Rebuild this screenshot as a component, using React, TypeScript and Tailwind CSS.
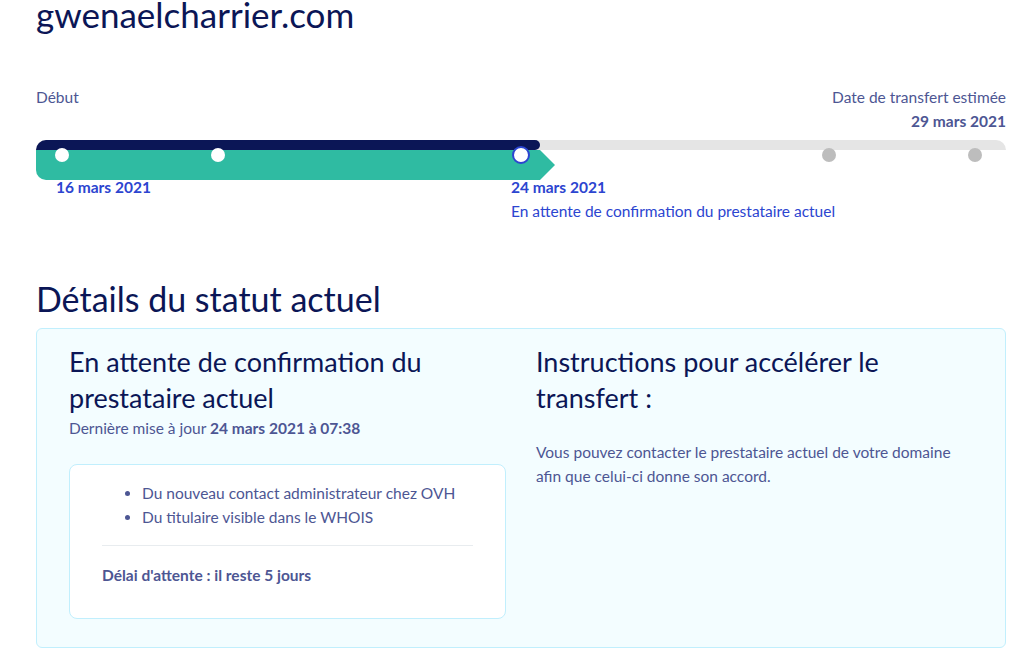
import React from "react";

const font = { fontFamily: "Lato, 'Noto Sans', sans-serif" };

export default function App() {
  const dots = [
    { x: 26, kind: "white" },
    { x: 182, kind: "white" },
    { x: 485, kind: "current" },
    { x: 793, kind: "grey" },
    { x: 939, kind: "grey" },
  ];
  return (
    <div className="w-[1036px] h-[650px] overflow-hidden bg-white" style={font}>
      <div className="pl-[36px] pr-[30px]">
        <h1 className="text-[35px] leading-[40px] -mt-[6px] text-[#0b1656]">gwenaelcharrier.com</h1>

        <div className="mt-[51px] flex justify-between items-start text-[15.5px] text-[#4d5693]">
          <div className="leading-[24px]">Début</div>
          <div className="text-right leading-[24px]">
            <div>Date de transfert estimée</div>
            <div className="font-bold">29 mars 2021</div>
          </div>
        </div>

        <div className="relative mt-[7px] w-[970px] h-[40px]">
          <div className="flex flex-col">
            <div className="h-[10px] bg-[#e5e5e5] rounded-tr-[10px] rounded-tl-[10px]">
              <div className="h-[10px] w-[504px] bg-[#0b1656] rounded-tl-[10px] rounded-r-[5px]" />
            </div>
            <div
              className="h-[30px] w-[519px] bg-[#2fbba2] rounded-bl-[10px]"
              style={{ clipPath: "polygon(0 0, 504px 0, 519px 50%, 504px 100%, 0 100%)" }}
            />
          </div>
          {dots.map((d, i) => (
            <div
              key={i}
              className={
                d.kind === "current"
                  ? "absolute w-[18px] h-[18px] rounded-full bg-white border-2 border-[#2c45d0]"
                  : d.kind === "white"
                  ? "absolute w-[14px] h-[14px] rounded-full bg-white"
                  : "absolute w-[14px] h-[14px] rounded-full bg-[#bdbdbd]"
              }
              style={
                d.kind === "current"
                  ? { left: d.x - 9, top: 6 }
                  : { left: d.x - 7, top: 8 }
              }
            />
          ))}
        </div>

        <div className="-mt-[5px] flex text-[15.5px] text-[#2c45d0] leading-[24px]">
          <div className="w-[475px] pl-[20px] font-bold">16 mars 2021</div>
          <div>
            <div className="font-bold">24 mars 2021</div>
            <div>En attente de confirmation du prestataire actuel</div>
          </div>
        </div>

        <h2 className="mt-[56px] text-[34px] leading-[40px] text-[#0b1656]">Détails du statut actuel</h2>

        <div className="mt-[9px] w-[970px] h-[320px] rounded-[6px] border border-[#c1effd] bg-[#f3fdff] px-[32px] pt-[15px] grid grid-cols-2 gap-[30px]">
          <div>
            <h3 className="text-[27px] leading-[36px] text-[#0b1656]">
              En attente de confirmation du prestataire actuel
            </h3>
            <p className="text-[15.5px] leading-[24px] text-[#4d5693]">
              Dernière mise à jour <span className="font-bold">24 mars 2021 à 07:38</span>
            </p>
            <div className="mt-[24px] rounded-[8px] border border-[#c1effd] bg-white px-[32px] pt-[16px] h-[155px]">
              <ul className="list-disc pl-[40px] text-[15.5px] leading-[24px] text-[#4d5693] marker:text-[#4d5693]">
                <li>Du nouveau contact administrateur chez OVH</li>
                <li>Du titulaire visible dans le WHOIS</li>
              </ul>
              <div className="mt-[16px] border-t border-[#e8ecef]" />
              <p className="mt-[17px] text-[15.5px] leading-[24px] font-bold text-[#4d5693]">
                Délai d'attente : il reste 5 jours
              </p>
            </div>
          </div>
          <div>
            <h3 className="text-[27px] leading-[36px] text-[#0b1656]">
              Instructions pour accélérer le transfert{"\u00a0"}:
            </h3>
            <p className="mt-[24px] text-[15.5px] leading-[24px] text-[#4d5693]">
              Vous pouvez contacter le prestataire actuel de votre domaine afin que celui-ci donne son accord.
            </p>
          </div>
        </div>
      </div>
    </div>
  );
}
